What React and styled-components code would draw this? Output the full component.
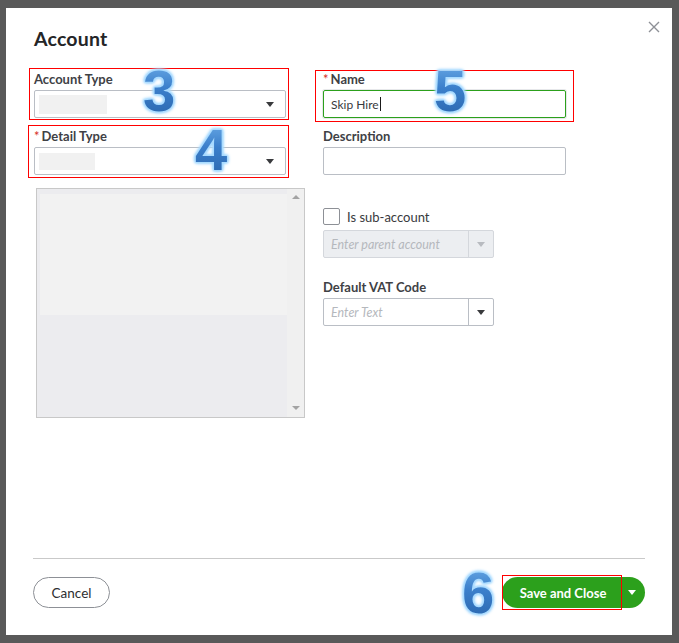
import React from 'react';
import styled, { createGlobalStyle, css } from 'styled-components';

const GlobalStyle = createGlobalStyle`
  html, body {
    margin: 0;
    padding: 0;
    background: #595959;
  }
  * {
    box-sizing: border-box;
  }
`;

const Caret = ({ color = '#393a3d' }) => (
  <svg width="8" height="5" viewBox="0 0 8 5">
    <path d="M0 0 L8 0 L4 5 Z" fill={color} />
  </svg>
);

export default function App() {
  return (
    <>
      <GlobalStyle />
      <Backdrop>
        <Modal>
          <Header>
            <Title>Account</Title>
            <Close aria-label="close">
              <svg width="12" height="12" viewBox="0 0 12 12">
                <path d="M1 1 L11 11 M11 1 L1 11" stroke="#8d9096" strokeWidth="1.4" />
              </svg>
            </Close>
          </Header>

          <Body>
            <Column>
              <Field $mark="-3px -3px -2px -5px" $gap={10}>
                <Label>Account Type</Label>
                <Select>
                  <Redacted $w={68} $h={19} />
                  <Caret />
                </Select>
              </Field>
              <Field $mark="-3px -3px -3px -6px" $gap={13}>
                <Label><Req>*</Req>Detail Type</Label>
                <Select>
                  <Redacted $w={56} $h={17} />
                  <Caret />
                </Select>
              </Field>
              <ListBox>
                <ListPane>
                  <ListTop />
                </ListPane>
                <ScrollTrack>
                  <ScrollArrow $dir="up" />
                  <ScrollArrow $dir="down" />
                </ScrollTrack>
              </ListBox>
            </Column>

            <Column>
              <Field $mark="-1px -8px -4px -8px" $gap={10}>
                <Label><Req>*</Req>Name</Label>
                <TextInput $focus>
                  Skip Hire<TextCursor />
                </TextInput>
              </Field>
              <Field $gap={33}>
                <Label>Description</Label>
                <TextInput />
              </Field>
              <CheckRow>
                <CheckBox />
                <CheckText>Is sub-account</CheckText>
              </CheckRow>
              <Combo $disabled>
                <ComboText>Enter parent account</ComboText>
                <ComboButton $disabled>
                  <Caret color="#b8bbc0" />
                </ComboButton>
              </Combo>
              <Field $top={21}>
                <Label>Default VAT Code</Label>
                <Combo>
                  <ComboText>Enter Text</ComboText>
                  <ComboButton>
                    <Caret />
                  </ComboButton>
                </Combo>
              </Field>
            </Column>
          </Body>

          <Footer>
            <CancelButton>Cancel</CancelButton>
            <SplitButton>
              <SaveButton>Save and Close</SaveButton>
              <SplitToggle>
                <Caret color="#ffffff" />
              </SplitToggle>
            </SplitButton>
          </Footer>

          <Callout $x={137} $y={54}>3</Callout>
          <Callout $x={189} $y={113}>4</Callout>
          <Callout $x={428} $y={54}>5</Callout>
          <Callout $x={456} $y={556}>6</Callout>
        </Modal>
      </Backdrop>
    </>
  );
}

const Backdrop = styled.div`
  width: 679px;
  height: 643px;
  padding: 8px 7px 8px 6px;
  background: #595959;
  font-family: Lato, "Open Sans", Arial, sans-serif;
`;

const Modal = styled.div`
  position: relative;
  width: 666px;
  height: 627px;
  background: #ffffff;
  display: flex;
  flex-direction: column;
  padding: 12px 27px 27px 28px;
`;

const Header = styled.div`
  display: flex;
  justify-content: space-between;
  align-items: flex-start;
`;

const Title = styled.h1`
  margin: 7px 0 0 0;
  font-size: 19.5px;
  line-height: 24px;
  font-weight: 700;
  color: #242527;
  letter-spacing: 0.2px;
`;

const Close = styled.button`
  margin: 0 -15px 0 0;
  padding: 0;
  border: none;
  background: none;
  width: 13px;
  height: 13px;
  display: flex;
  align-items: center;
  justify-content: center;
`;

const Body = styled.div`
  margin-top: 20px;
  display: grid;
  grid-template-columns: 252px 243px;
  column-gap: 37px;
  align-items: start;
`;

const Column = styled.div`
  display: flex;
  flex-direction: column;
`;

const Field = styled.div`
  position: relative;
  display: flex;
  flex-direction: column;
  margin-top: ${p => p.$top || 0}px;
  margin-bottom: ${p => p.$gap || 0}px;
  ${p => p.$mark && css`
    &::after {
      content: '';
      position: absolute;
      inset: ${p.$mark};
      border: 1px solid #ff0000;
      pointer-events: none;
    }
  `}
`;

const Label = styled.label`
  font-size: 13px;
  line-height: 16px;
  font-weight: 700;
  color: #404145;
  margin-bottom: 3px;
`;

const Req = styled.span`
  color: #d52b1e;
  margin-right: 2px;
  font-weight: 400;
`;

const Select = styled.div`
  height: 28px;
  border: 1px solid #babec5;
  border-radius: 2px;
  display: flex;
  align-items: center;
  justify-content: space-between;
  padding: 0 11px 0 4px;
`;

const Redacted = styled.div`
  width: ${p => p.$w}px;
  height: ${p => p.$h}px;
  background: #f1f1f1;
`;

const ListBox = styled.div`
  width: 269px;
  height: 230px;
  margin-left: 2px;
  border: 1px solid #c8c8c8;
  display: flex;
  background: #ececef;
`;

const ListPane = styled.div`
  flex: 1;
  padding: 5px 0 0 3px;
`;

const ListTop = styled.div`
  height: 121px;
  background: #f2f2f2;
`;

const ScrollTrack = styled.div`
  width: 17px;
  background: #f0f0f0;
  display: flex;
  flex-direction: column;
  justify-content: space-between;
  align-items: center;
  padding: 6px 0 7px;
`;

const ScrollArrow = styled.div`
  width: 0;
  height: 0;
  border-left: 4px solid transparent;
  border-right: 4px solid transparent;
  ${p => p.$dir === 'up'
    ? css`border-bottom: 4px solid #a3a3a3;`
    : css`border-top: 4px solid #a3a3a3;`}
`;

const TextInput = styled.div`
  height: 28px;
  border: 1px solid ${p => (p.$focus ? '#2ca01c' : '#babec5')};
  border-radius: 2px;
  display: flex;
  align-items: center;
  padding: 0 7px;
  font-size: 12px;
  color: #393a3d;
  ${p => p.$focus && css`box-shadow: 0 0 0 1px #e6e7ea;`}
`;

const TextCursor = styled.span`
  display: inline-block;
  width: 1px;
  height: 14px;
  background: #1a1a1a;
  margin-left: 1px;
`;

const CheckRow = styled.div`
  display: flex;
  align-items: center;
  gap: 7px;
  height: 17px;
  margin-bottom: 5px;
`;

const CheckBox = styled.div`
  width: 17px;
  height: 17px;
  border: 1px solid #8d9096;
  border-radius: 2px;
  background: #ffffff;
`;

const CheckText = styled.span`
  font-size: 13px;
  font-weight: 400;
  color: #393a3d;
`;

const Combo = styled.div`
  width: 171px;
  height: 28px;
  border: 1px solid ${p => (p.$disabled ? '#d4d7dc' : '#babec5')};
  border-radius: 2px;
  background: ${p => (p.$disabled ? '#eceef1' : '#ffffff')};
  display: flex;
  align-items: stretch;
`;

const ComboText = styled.div`
  flex: 1;
  display: flex;
  align-items: center;
  padding-left: 7px;
  font-size: 12.5px;
  font-style: italic;
  color: #b5b8bd;
`;

const ComboButton = styled.div`
  width: 25px;
  border-left: 1px solid ${p => (p.$disabled ? '#d4d7dc' : '#babec5')};
  display: flex;
  align-items: center;
  justify-content: center;
`;

const Footer = styled.div`
  margin-top: auto;
  margin-left: -1px;
  border-top: 1px solid #c9c9c9;
  padding-top: 18px;
  display: flex;
  justify-content: space-between;
  align-items: center;
`;

const CancelButton = styled.button`
  width: 77px;
  height: 31px;
  border: 1px solid #8d9096;
  border-radius: 16px;
  background: #ffffff;
  font-family: inherit;
  font-size: 13.5px;
  font-weight: 400;
  color: #2d2e31;
  padding: 0;
`;

const SplitButton = styled.div`
  position: relative;
  display: flex;
  height: 31px;
  border-radius: 16px;
  background: #2ca01c;
`;

const SaveButton = styled.button`
  position: relative;
  width: 120px;
  height: 31px;
  border: none;
  background: transparent;
  color: #ffffff;
  font-family: inherit;
  font-size: 13px;
  font-weight: 700;
  padding: 0 0 0 2px;
  &::after {
    content: '';
    position: absolute;
    inset: -2px 0 -2px 0;
    border: 1px solid #ff0000;
  }
`;

const SplitToggle = styled.div`
  width: 23px;
  display: flex;
  align-items: center;
  justify-content: center;
  padding-right: 3px;
`;

const Callout = styled.div`
  position: absolute;
  left: ${p => p.$x}px;
  top: ${p => p.$y}px;
  font-family: "Liberation Sans", Arial, sans-serif;
  font-weight: 700;
  font-size: 58px;
  line-height: 1;
  color: #3a7cc8;
  background: linear-gradient(180deg, #6aaae6 0%, #3b7fcb 45%, #2a66ad 100%);
  -webkit-background-clip: text;
  background-clip: text;
  -webkit-text-fill-color: transparent;
  filter: drop-shadow(0 0 1px #b6e2ff) drop-shadow(0 0 1px #9dd4ff) drop-shadow(0 0 1px #9dd4ff) drop-shadow(0 0 1px #b6e2ff);
  pointer-events: none;
`;
